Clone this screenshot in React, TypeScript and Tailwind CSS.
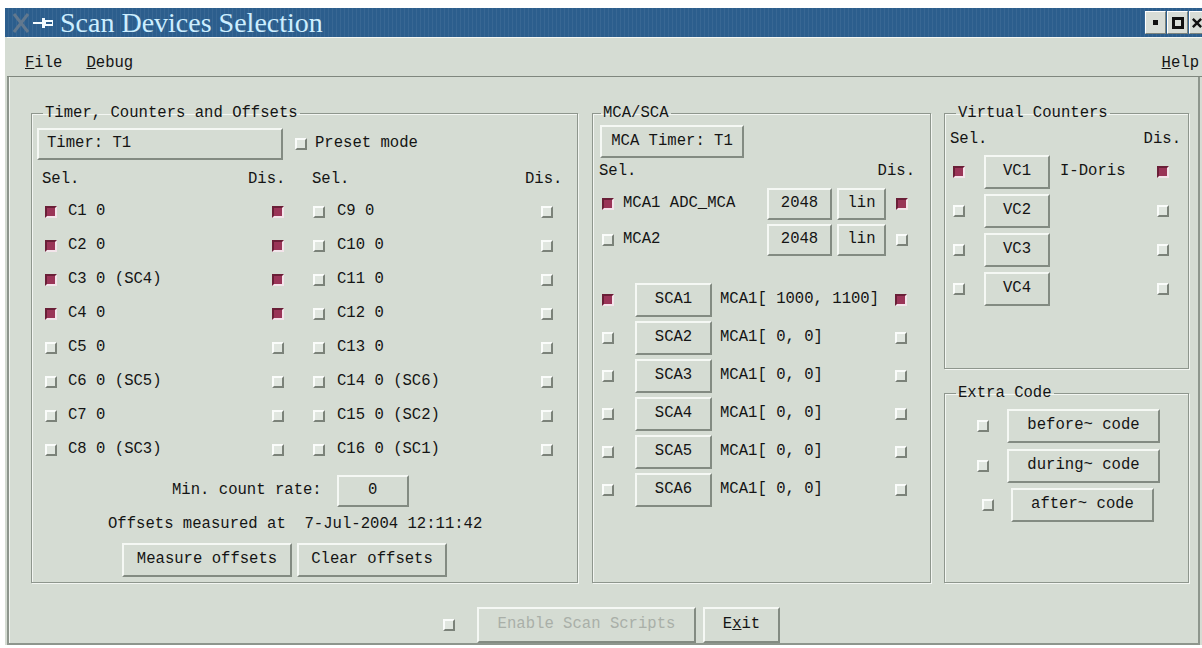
import type { ReactNode } from 'react';

const leftCounters: { label: string; on: boolean }[] = [
  { label: 'C1 0', on: true },
  { label: 'C2 0', on: true },
  { label: 'C3 0 (SC4)', on: true },
  { label: 'C4 0', on: true },
  { label: 'C5 0', on: false },
  { label: 'C6 0 (SC5)', on: false },
  { label: 'C7 0', on: false },
  { label: 'C8 0 (SC3)', on: false },
];

const rightCounters = ['C9 0', 'C10 0', 'C11 0', 'C12 0', 'C13 0', 'C14 0 (SC6)', 'C15 0 (SC2)', 'C16 0 (SC1)'];

const scaRows = [
  { name: 'SCA1', range: 'MCA1[ 1000, 1100]', on: true },
  { name: 'SCA2', range: 'MCA1[ 0, 0]', on: false },
  { name: 'SCA3', range: 'MCA1[ 0, 0]', on: false },
  { name: 'SCA4', range: 'MCA1[ 0, 0]', on: false },
  { name: 'SCA5', range: 'MCA1[ 0, 0]', on: false },
  { name: 'SCA6', range: 'MCA1[ 0, 0]', on: false },
];

const virtualCounters = [
  { name: 'VC1', note: 'I-Doris', on: true },
  { name: 'VC2', note: '', on: false },
  { name: 'VC3', note: '', on: false },
  { name: 'VC4', note: '', on: false },
];

function Toggle({ on = false }: { on?: boolean }) {
  return on ? (
    <span className="block w-[12px] h-[12px] shrink-0 border-2 border-t-[#6a1f37] border-l-[#6a1f37] border-r-[#f3e4ea] border-b-[#f3e4ea] bg-[#9a3457]" />
  ) : (
    <span className="block w-[12px] h-[12px] shrink-0 border-2 border-t-[#fafcfa] border-l-[#fafcfa] border-r-[#7b8279] border-b-[#7b8279] bg-[#e0e6df]" />
  );
}

function Button({
  className = '',
  children,
  disabled = false,
}: {
  className?: string;
  children: ReactNode;
  disabled?: boolean;
}) {
  return (
    <div
      className={`flex items-center shrink-0 border-2 border-t-[#f5f8f4] border-l-[#f5f8f4] border-r-[#838b82] border-b-[#838b82] ${
        disabled ? 'text-[#a9afa8]' : ''
      } ${className}`}
    >
      {children}
    </div>
  );
}

function Group({
  title,
  className = '',
  legendClass = '',
  children,
}: {
  title: string;
  className?: string;
  legendClass?: string;
  children?: ReactNode;
}) {
  return (
    <fieldset
      className={`shrink-0 min-w-0 border border-[#8e968d] shadow-[inset_1px_1px_0_#f3f6f2,1px_1px_0_#f3f6f2] ${className}`}
    >
      <legend className={`leading-[18px] px-[2px] ${legendClass}`}>{title}</legend>
      {children}
    </fieldset>
  );
}

function TitleBar() {
  return (
    <div className="h-[29px] flex items-center bg-[#2c5e8d] bg-[repeating-linear-gradient(90deg,transparent_0px,transparent_3px,rgba(255,255,255,0.06)_3px,rgba(255,255,255,0.06)_4px)] text-[#cdeeff]">
      {/* dim X logo */}
      <svg width="16" height="20" viewBox="0 0 16 20" className="ml-[8px]">
        <path d="M1 1 L15 19 M15 1 L1 19" stroke="#62788e" strokeWidth="3" />
      </svg>
      {/* pin */}
      <svg width="22" height="12" viewBox="0 0 22 12" className="ml-[4px]">
        <rect x="0" y="5" width="9" height="2" fill="#f4fbff" />
        <rect x="9" y="1" width="3" height="10" fill="#f4fbff" />
        <rect x="12" y="3" width="8" height="6" fill="#f4fbff" />
        <rect x="13" y="5" width="6" height="2" fill="#2c5e8d" />
      </svg>
      <span className="ml-[5px] font-['Liberation_Serif',serif] text-[28px] leading-[29px]">
        Scan Devices Selection
      </span>
      <div className="ml-auto flex gap-[1px] h-[23px]">
        <div className="w-[21px] h-[23px] flex items-center justify-center bg-[#d8ddd7] border border-t-white border-l-white border-r-[#7d847c] border-b-[#7d847c]">
          <span className="block w-[5px] h-[5px] bg-[#111]" />
        </div>
        <div className="w-[21px] h-[23px] flex items-center justify-center bg-[#d8ddd7] border border-t-white border-l-white border-r-[#7d847c] border-b-[#7d847c]">
          <span className="block w-[12px] h-[12px] border-[3px] border-[#111]" />
        </div>
        <div className="w-[13px] h-[23px] flex items-center pl-[2px] bg-[#d8ddd7] border border-t-white border-l-white border-r-0 border-b-[#7d847c]">
          <svg width="12" height="12" viewBox="0 0 12 12">
            <path d="M1 1 L11 11 M11 1 L1 11" stroke="#111" strokeWidth="3" />
          </svg>
        </div>
      </div>
    </div>
  );
}

function MenuBar() {
  return (
    <div className="h-[40px] ml-[2px] flex items-start pt-[16px] border-t border-t-[#f3f6f2] border-b border-b-[#7f877e] leading-[18px]">
      <span className="ml-[18px]">
        <span className="underline">F</span>ile
      </span>
      <span className="ml-[24px]">
        <span className="underline">D</span>ebug
      </span>
      <span className="ml-auto mr-[3px]">
        <span className="underline">H</span>elp
      </span>
    </div>
  );
}

function TimerGroup() {
  return (
    <Group title="Timer, Counters and Offsets" className="w-[547px] h-[479px]" legendClass="ml-[11px]">
      <div className="flex items-center mt-[6px] ml-[5px] h-[32px]">
        <Button className="w-[246px] h-[32px] pl-[8px]">Timer: T1</Button>
        <span className="ml-[12px]">
          <Toggle />
        </span>
        <span className="ml-[8px]">Preset mode</span>
      </div>

      <div className="flex items-center h-[20px] mt-[10px] pl-[10px]">
        <span className="w-[206px]">Sel.</span>
        <span className="w-[64px]">Dis.</span>
        <span className="w-[213px]">Sel.</span>
        <span>Dis.</span>
      </div>

      <div className="mt-[5px] flex flex-col">
        {leftCounters.map((c, i) => (
          <div key={c.label} className="flex items-center h-[34px] pl-[13px]">
            <div className="w-[227px] flex items-center gap-[11px]">
              <Toggle on={c.on} />
              <span className="whitespace-pre">{c.label}</span>
            </div>
            <div className="w-[41px]">
              <Toggle on={c.on} />
            </div>
            <div className="w-[228px] flex items-center gap-[12px]">
              <Toggle />
              <span className="whitespace-pre">{rightCounters[i]}</span>
            </div>
            <Toggle />
          </div>
        ))}
      </div>

      <div className="flex items-center mt-[8px] h-[32px] pl-[140px]">
        <span>Min. count rate:</span>
        <Button className="ml-[15px] w-[72px] h-[32px] justify-center">0</Button>
      </div>

      <div className="flex items-center mt-[8px] h-[20px] pl-[76px] whitespace-pre">
        Offsets measured at  7-Jul-2004 12:11:42
      </div>

      <div className="flex mt-[8px] h-[34px] pl-[90px] gap-[5px]">
        <Button className="w-[170px] h-[34px] justify-center">Measure offsets</Button>
        <Button className="w-[150px] h-[34px] justify-center">Clear offsets</Button>
      </div>
    </Group>
  );
}

function McaGroup() {
  return (
    <Group title="MCA/SCA" className="w-[339px] h-[479px]" legendClass="ml-[8px]">
      <Button className="mt-[3px] ml-[7px] w-[144px] h-[33px] justify-center">MCA Timer: T1</Button>

      <div className="flex items-center justify-between h-[20px] mt-[4px] pl-[6px] pr-[15px]">
        <span>Sel.</span>
        <span>Dis.</span>
      </div>

      {[
        { name: 'MCA1 ADC_MCA', on: true },
        { name: 'MCA2', on: false },
      ].map((m, i) => (
        <div key={m.name} className={`flex items-center h-[32px] pl-[9px] ${i === 0 ? 'mt-[6px]' : 'mt-[4px]'}`}>
          <div className="w-[165px] flex items-center gap-[9px]">
            <Toggle on={m.on} />
            <span className="whitespace-pre">{m.name}</span>
          </div>
          <Button className="w-[65px] h-[32px] justify-center">2048</Button>
          <Button className="ml-[5px] w-[49px] h-[32px] justify-center">lin</Button>
          <span className="ml-[10px]">
            <Toggle on={m.on} />
          </span>
        </div>
      ))}

      <div className="mt-[25px] flex flex-col">
        {scaRows.map((s) => (
          <div key={s.name} className="flex items-center h-[38px] pl-[9px]">
            <Toggle on={s.on} />
            <Button className="ml-[21px] w-[77px] h-[34px] justify-center">{s.name}</Button>
            <span className="ml-[8px] w-[175px] whitespace-pre">{s.range}</span>
            <Toggle on={s.on} />
          </div>
        ))}
      </div>
    </Group>
  );
}

function VirtualGroup() {
  return (
    <Group title="Virtual Counters" className="w-[245px] h-[265px]" legendClass="ml-[11px]">
      <div className="flex items-center justify-between h-[20px] mt-[8px] pl-[5px] pr-[7px]">
        <span>Sel.</span>
        <span>Dis.</span>
      </div>
      {virtualCounters.map((v) => (
        <div key={v.name} className="flex items-center h-[34px] mt-[5px] pl-[8px]">
          <Toggle on={v.on} />
          <Button className="ml-[19px] w-[66px] h-[34px] justify-center">{v.name}</Button>
          <span className="ml-[10px] w-[97px]">{v.note}</span>
          <Toggle on={v.on} />
        </div>
      ))}
    </Group>
  );
}

function ExtraGroup() {
  return (
    <Group title="Extra Code" className="mt-[15px] w-[245px] h-[199px]" legendClass="ml-[11px]">
      <div className="flex items-center h-[34px] mt-[7px] pl-[32px]">
        <Toggle />
        <Button className="ml-[18px] w-[153px] h-[34px] justify-center">before~ code</Button>
      </div>
      <div className="flex items-center h-[34px] mt-[6px] pl-[32px]">
        <Toggle />
        <Button className="ml-[18px] w-[153px] h-[34px] justify-center">during~ code</Button>
      </div>
      <div className="flex items-center h-[34px] mt-[5px] pl-[37px]">
        <Toggle />
        <Button className="ml-[17px] w-[143px] h-[34px] justify-center">after~ code</Button>
      </div>
    </Group>
  );
}

export default function App() {
  return (
    <div className="w-[1202px] h-[648px] bg-white overflow-hidden font-['Liberation_Mono',monospace] text-[15.6px] text-[#141414]">
      <div className="mt-[8px] ml-[5px] h-[637px] flex flex-col bg-[#d5dcd3]">
        <TitleBar />
        <MenuBar />

        <div className="flex-1 ml-[2px] mr-[2px] border-2 border-t-0 border-[#8e968d] shadow-[inset_1px_0_0_#f3f6f2]">
          <div className="flex mt-[27px] pl-[22px]">
            <TimerGroup />
            <div className="ml-[14px]">
              <McaGroup />
            </div>
            <div className="ml-[13px] flex flex-col">
              <VirtualGroup />
              <ExtraGroup />
            </div>
          </div>

          <div className="flex items-center mt-[24px] h-[36px] pl-[434px]">
            <Toggle />
            <Button disabled className="ml-[22px] w-[219px] h-[36px] justify-center">
              Enable Scan Scripts
            </Button>
            <Button className="ml-[7px] w-[77px] h-[36px] justify-center">
              E<span className="underline">x</span>it
            </Button>
          </div>
        </div>
      </div>
    </div>
  );
}
